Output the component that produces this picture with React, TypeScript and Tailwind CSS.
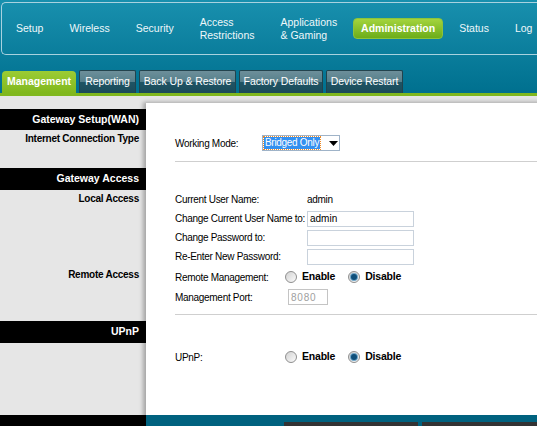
import React from 'react'

const font = { fontFamily: '"Liberation Sans", Arial, sans-serif' }

function Radio({ checked }: { checked?: boolean }) {
  return (
    <span className="w-[12px] h-[12px] rounded-full border border-[#8f8f8f] bg-gradient-to-br from-[#d2d2d2] to-[#fbfbfb] flex items-center justify-center shrink-0">
      {checked && <span className="w-[6px] h-[6px] rounded-full bg-[#0f4f7a] ring-1 ring-[#6fa6c8]" />}
    </span>
  )
}

function RadioPair({ value }: { value: 'enable' | 'disable' }) {
  return (
    <div className="flex items-center font-bold text-[10.5px] tracking-[-0.2px] text-black">
      <Radio checked={value === 'enable'} />
      <span className="ml-[5px]">Enable</span>
      <span className="ml-[13px]"><Radio checked={value === 'disable'} /></span>
      <span className="ml-[5px]">Disable</span>
    </div>
  )
}

function BlackBar({ label, h }: { label: string; h: string }) {
  return (
    <div className={`${h} bg-black text-white font-bold text-[10.5px] flex items-center justify-end pr-[7px]`}>
      {label}
    </div>
  )
}

const tabs = [
  { label: 'Reporting', w: 'w-[57px]' },
  { label: 'Back Up & Restore', w: 'w-[97px]' },
  { label: 'Factory Defaults', w: 'w-[84px]' },
  { label: 'Device Restart', w: 'w-[77px]' },
]

export default function App() {
  return (
    <div className="w-[537px] h-[426px] overflow-hidden bg-[#e6e6e6]" style={font}>
      {/* header */}
      <div className="h-[93px] bg-gradient-to-b from-[#1890ae] to-[#00708f] pt-[2px] pl-[1px]">
        <div className="h-[53px] border border-r-0 border-[#a9d2df] rounded-l-[5px] flex items-center pl-[14px] gap-[26px] text-[10.5px] text-[#eef7fa] whitespace-nowrap overflow-hidden">
          <span>Setup</span>
          <span>Wireless</span>
          <span>Security</span>
          <span className="leading-[13px]">Access<br />Restrictions</span>
          <span className="leading-[13px]">Applications<br />&amp; Gaming</span>
          <span className="-mx-[10px] w-[90px] h-[21px] shrink-0 rounded-[4px] bg-gradient-to-b from-[#a4d43c] to-[#6cad18] border border-[#8cc43a] flex items-center justify-center font-bold text-white text-[10.5px]">
            Administration
          </span>
          <span>Status</span>
          <span>Log</span>
        </div>
        <div className="mt-[15px] flex items-end gap-[3px] pl-[1px] h-[23px]">
          <div className="w-[74px] h-[22px] rounded-t-[4px] bg-gradient-to-b from-[#9ccc34] to-[#80b81c] flex items-center justify-center font-bold text-white text-[10.5px]">
            Management
          </div>
          {tabs.map(t => (
            <div
              key={t.label}
              className={`${t.w} h-[23px] rounded-t-[2px] border border-b-0 border-[#22434d] bg-[linear-gradient(#6d8f9a,#56808c_48%,#1f5464_52%,#1b4b5a)] flex items-center justify-center text-white text-[10.5px] tracking-[-0.1px] whitespace-nowrap`}
            >
              {t.label}
            </div>
          ))}
        </div>
      </div>
      <div className="h-[3px] bg-[#80b81e]" />

      {/* body */}
      <div className="flex">
        <div className="w-[146px] shrink-0">
          <div className="h-[13px]" />
          <BlackBar label="Gateway Setup(WAN)" h="h-[21px]" />
          <div className="h-[38px] pt-[3px] pr-[7px] text-right font-bold text-[10px] tracking-[-0.25px] leading-[12px]">
            Internet Connection Type
          </div>
          <BlackBar label="Gateway Access" h="h-[22px]" />
          <div className="h-[131px] pt-[3px] pr-[7px] text-right font-bold text-[10px] tracking-[-0.25px] leading-[12px]">
            <div>Local Access</div>
            <div className="mt-[64px]">Remote Access</div>
          </div>
          <BlackBar label="UPnP" h="h-[22px]" />
          <div className="h-[72px]" />
          <div className="h-[40px] bg-black" />
        </div>

        <div className="flex-1 mt-[7px] bg-white shadow-[-3px_-1px_4px_rgba(0,0,0,0.28)]">
          <div className="pl-[29px] text-[10px] tracking-[-0.3px] text-black">
            {/* working mode */}
            <div className="h-[59px] pt-[32px] border-b border-[#cfcfcf]">
              <div className="h-[16px] flex items-center">
                <span className="w-[87px]">Working Mode:</span>
                <div className="w-[78px] h-[16px] border border-[#9fb3c8] flex items-center pl-[1px]">
                  <span className="bg-[#3390f0] text-white px-[1px] outline-1 outline-dotted outline-[#f08a24] leading-[12px] whitespace-nowrap">Bridged Only</span>
                  <svg className="ml-[9px]" width="9" height="5" viewBox="0 0 9 5"><path d="M0 0h9L4.5 5z" fill="#000" /></svg>
                </div>
              </div>
            </div>

            {/* access */}
            <div className="h-[153px] pt-[28px] border-b border-[#cfcfcf]">
              <div className="h-[19px] flex items-center">
                <span className="w-[132px]">Current User Name:</span>
                <span>admin</span>
              </div>
              <div className="h-[19px] flex items-center">
                <span className="w-[132px] whitespace-nowrap">Change Current User Name to:</span>
                <div className="w-[107px] h-[16px] border border-[#c9d2dc] flex items-center pl-[2px] tracking-normal">admin</div>
              </div>
              <div className="h-[19px] flex items-center">
                <span className="w-[132px]">Change Password to:</span>
                <div className="w-[107px] h-[16px] border border-[#c9d2dc]" />
              </div>
              <div className="h-[19px] flex items-center">
                <span className="w-[132px]">Re-Enter New Password:</span>
                <div className="w-[107px] h-[16px] border border-[#c9d2dc]" />
              </div>
              <div className="h-[22px] flex items-center">
                <span className="w-[110px]">Remote Management:</span>
                <RadioPair value="disable" />
              </div>
              <div className="h-[18px] flex items-center">
                <span className="w-[113px]">Management Port:</span>
                <div className="w-[40px] h-[16px] border border-[#c4c4c4] flex items-center pl-[2px] text-[#a0a0a0] tracking-[0.8px]">8080</div>
              </div>
            </div>

            {/* upnp */}
            <div className="h-[100px] pt-[32px]">
              <div className="h-[20px] flex items-center">
                <span className="w-[110px]">UPnP:</span>
                <RadioPair value="disable" />
              </div>
            </div>
          </div>
          <div className="h-[40px] bg-[#00627f] flex items-start gap-[4px] pl-[138px] pt-[7px]">
            <div className="w-[134px] h-[20px] bg-[#333333] text-white text-[10px] font-bold flex items-start justify-center pt-[1px]">Save</div>
            <div className="w-[134px] h-[20px] bg-[#333333] text-white text-[10px] font-bold flex items-start justify-center pt-[1px]">Cancel</div>
          </div>
        </div>
      </div>
    </div>
  )
}
